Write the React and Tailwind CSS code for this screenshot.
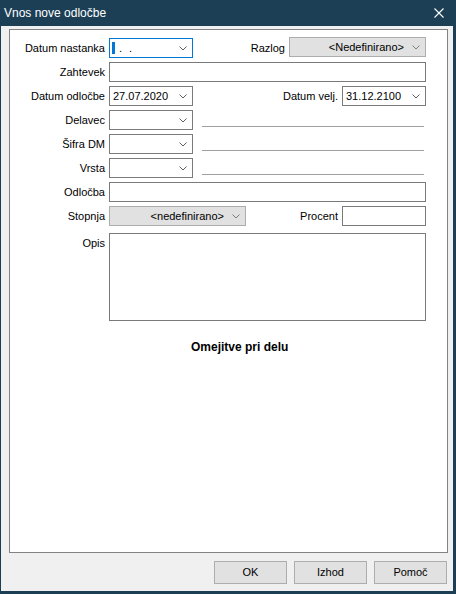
const font = { fontFamily: '"Liberation Sans", Arial, sans-serif' };

function Chevron({ muted }) {
  return (
    <svg width="8" height="5" viewBox="0 0 8 5" className="shrink-0">
      <polyline
        points="0.5,0.5 4,4 7.5,0.5"
        fill="none"
        stroke={muted ? "#7d7d7d" : "#5c5c5c"}
        strokeWidth="1"
      />
    </svg>
  );
}

function Combo({ width, value, disabled, focused, children }) {
  const box = disabled
    ? "bg-[#e1e1e1] border-[#adadad]"
    : focused
    ? "bg-white border-[#0078d7]"
    : "bg-white border-[#7a7a7a]";
  return (
    <div
      className={`h-[20px] border ${box} flex items-center pr-[5px] shrink-0`}
      style={{ width }}
    >
      {disabled ? (
        <span className="flex-1 text-right pr-[8px] text-[11px] text-black">{value}</span>
      ) : (
        <span className="flex-1 pl-[3px] text-[11px] text-black flex items-center">
          {children || value}
        </span>
      )}
      <Chevron muted={disabled} />
    </div>
  );
}

function Field({ width, height = 20 }) {
  return (
    <div
      className="border border-[#7a7a7a] bg-white shrink-0"
      style={{ width, height }}
    />
  );
}

function Label({ children, top }) {
  return (
    <div
      className={`w-[95px] shrink-0 text-right text-[11px] text-black ${top ? "self-start pt-[2px]" : ""}`}
    >
      {children}
    </div>
  );
}

function Row({ children, className = "" }) {
  return <div className={`w-[416px] h-[20px] flex items-center gap-[4px] ${className}`}>{children}</div>;
}

function LinkedRow({ label }) {
  return (
    <Row>
      <Label>{label}</Label>
      <Combo width={84} value="" />
      <div className="self-end mb-[3px] ml-[5px] w-[222px] h-px bg-[#a0a0a0]" />
    </Row>
  );
}

function Button({ children }) {
  return (
    <button className="w-[73px] h-[23px] border border-[#adadad] bg-[#e1e1e1] text-[11px] text-black">
      {children}
    </button>
  );
}

export default function App() {
  return (
    <div
      className="w-[456px] h-[594px] bg-[#f0f0f0] border-l border-r-[3px] border-b-[3px] border-[#1c3f56] flex flex-col"
      style={font}
    >
      <div className="h-[26px] shrink-0 bg-[#1c3f56] flex items-center justify-between -ml-px pl-[4px] pr-[9px]">
        <span className="text-[12px] text-white">Vnos nove odločbe</span>
        <svg width="10" height="10" viewBox="0 0 10 10">
          <path d="M0.5 0.5 L9.5 9.5 M9.5 0.5 L0.5 9.5" stroke="#ffffff" strokeWidth="1.1" />
        </svg>
      </div>

      <div className="ml-[8px] mt-[3px] w-[439px] h-[524px] border border-[#828282] bg-white flex flex-col gap-[4px] pt-[8px]">
        <Row>
          <Label>Datum nastanka</Label>
          <Combo width={84} focused>
            <span className="w-[3px] h-[12px] bg-[#0078d7] ml-[-1px]" />
            <span className="ml-[4px]">.</span>
            <span className="ml-[7px]">.</span>
          </Combo>
          <div className="flex-1" />
          <span className="text-[11px] text-black">Razlog</span>
          <div className="-mt-[2px]">
            <Combo width={137} value="<Nedefinirano>" disabled />
          </div>
        </Row>

        <Row>
          <Label>Zahtevek</Label>
          <Field width={317} />
        </Row>

        <Row>
          <Label>Datum odločbe</Label>
          <Combo width={84} value="27.07.2020" />
          <div className="flex-1" />
          <span className="text-[11px] text-black">Datum velj.</span>
          <Combo width={84} value="31.12.2100" />
        </Row>

        <LinkedRow label="Delavec" />
        <LinkedRow label="Šifra DM" />
        <LinkedRow label="Vrsta" />

        <Row>
          <Label>Odločba</Label>
          <Field width={317} />
        </Row>

        <Row>
          <Label>Stopnja</Label>
          <Combo width={137} value="<nedefinirano>" disabled />
          <div className="flex-1" />
          <span className="text-[11px] text-black">Procent</span>
          <Field width={84} />
        </Row>

        <div className="w-[416px] flex gap-[4px] mt-[3px]">
          <Label top>Opis</Label>
          <Field width={317} height={88} />
        </div>

        <div className="pl-[181px] mt-[13px] text-[12px] font-bold text-black">Omejitve pri delu</div>
      </div>

      <div className="flex justify-end gap-[7px] mt-[8px] pr-[6px]">
        <Button>OK</Button>
        <Button>Izhod</Button>
        <Button>Pomoč</Button>
      </div>
    </div>
  );
}
